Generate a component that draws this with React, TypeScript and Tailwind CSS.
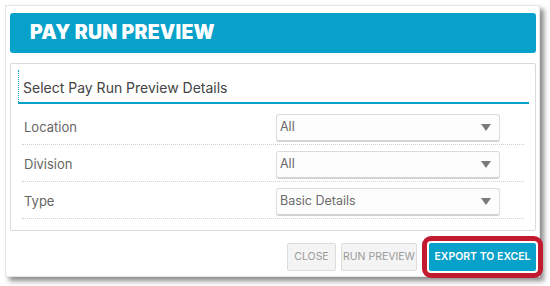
import React from "react";

function Select({ value }: { value: string }) {
  return (
    <div className="w-[224px] h-[28px] rounded-[3px] border border-[#dcdcdc] border-b-2 border-b-[#d4d4d4] bg-[#fdfdfd] flex items-center justify-between pl-[3px] pr-[8px]">
      <span className="text-[12.5px] text-[#6a6a6a]">{value}</span>
      <svg width="10" height="7" viewBox="0 0 10 7">
        <path d="M0 0 H10 L5 7 Z" fill="#7a7a7a" />
      </svg>
    </div>
  );
}

function Row({ label, value }: { label: string; value: string }) {
  return (
    <div className="flex items-center pt-[6px] pb-[2px] border-b border-dotted border-[#cfcfcf]">
      <div className="w-[254px] pl-[2px] text-[13px] text-[#666]">{label}</div>
      <Select value={value} />
    </div>
  );
}

export default function App() {
  return (
    <div className="w-[550px] h-[286px] bg-white pt-[5px] pl-[5px]" style={{ fontFamily: "Inter, 'Noto Sans', sans-serif" }}>
      <div className="w-[535px] h-[272px] bg-white border border-[#e6e6e6] shadow-[4px_4px_5px_rgba(0,0,0,0.45)] pt-[7px] pl-[4px] pr-[3px] flex flex-col">
        <div className="h-[40px] rounded-[3px] bg-[#08a1c9] flex items-center pl-[20px]">
          <span className="text-white text-[19.5px] font-black tracking-[0.2px]">PAY RUN PREVIEW</span>
        </div>
        <div className="mt-[10px] h-[168px] border border-[#dadada] rounded-[2px] pl-[7px] pr-[6px] pt-[6px] flex flex-col">
          <div className="h-[34px] border-b-2 border-solid border-b-[#08a1c9]">
            <div className="h-full border-l border-dotted border-l-[#0a9fd0] flex items-center pl-[4px] pt-[2px]">
              <span className="text-[14px] text-[#444]">Select Pay Run Preview Details</span>
            </div>
          </div>
          <div className="mt-[4px] ml-[4px] mr-[5px] flex flex-col">
            <Row label="Location" value="All" />
            <Row label="Division" value="All" />
            <Row label="Type" value="Basic Details" />
          </div>
        </div>
        <div className="flex justify-end items-center gap-[5px] mt-[12px]">
          <button className="h-[28px] w-[49px] bg-[#f4f4f4] border border-[#dddddd] rounded-[2px] text-[10.5px] text-[#9a9a9a]">CLOSE</button>
          <button className="h-[28px] w-[76px] bg-[#f4f4f4] border border-[#dddddd] rounded-[2px] text-[10.5px] text-[#9a9a9a]">RUN PREVIEW</button>
          <button className="ml-[7px] h-[28px] w-[107px] bg-[#08a1c9] rounded-[2px] text-[10.5px] font-semibold text-white outline-[5px] outline-solid outline-[#c21a2f] outline-offset-[2px]">EXPORT TO EXCEL</button>
        </div>
      </div>
    </div>
  );
}
